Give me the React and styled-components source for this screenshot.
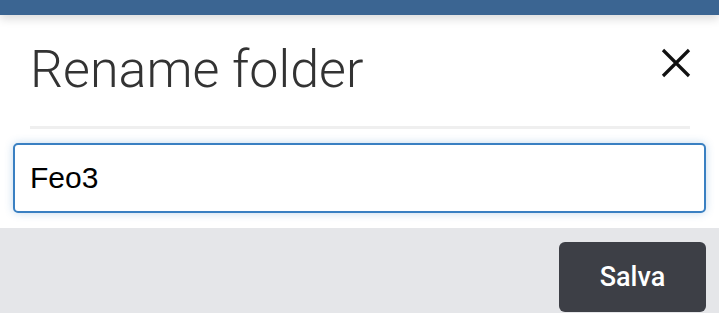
import styled, { createGlobalStyle } from "styled-components";

const GlobalStyle = createGlobalStyle`
    body {
        margin: 0;
        background: #ffffff;
        font-family: Roboto, "Noto Sans", sans-serif;
    }
`

export default function App() {
    return (
        <>
            <GlobalStyle />
            <TopBar />
            <Dialog>
                <Header>
                    <Title>Rename folder</Title>
                    <CloseButton aria-label="Close">
                        <svg width="30" height="30" viewBox="0 0 30 30">
                            <path d="M2 2 L28 28 M28 2 L2 28" stroke="#111" strokeWidth="3.2" fill="none" />
                        </svg>
                    </CloseButton>
                </Header>
                <Divider />
                <Body>
                    <NameInput defaultValue="Feo3" />
                </Body>
                <Footer>
                    <SaveButton>Salva</SaveButton>
                </Footer>
            </Dialog>
        </>
    )
}

const TopBar = styled.div`
    height: 15px;
    background-color: #3b6592;
    box-shadow: 0 4px 10px rgba(0, 0, 0, 0.14);
    position: relative;
`

const Dialog = styled.div`
    display: flex;
    flex-direction: column;
`

const Header = styled.div`
    display: flex;
    justify-content: space-between;
    align-items: flex-start;
    padding: 25px 28px 0 30px;
`

const Title = styled.h1`
    margin: 0;
    font-size: 52px;
    line-height: 60px;
    font-weight: 300;
    color: #333333;
`

const CloseButton = styled.button`
    border: none;
    background: none;
    padding: 0;
    margin-top: 8px;
    width: 30px;
    height: 30px;
    display: flex;
`

const Divider = styled.div`
    height: 3px;
    margin: 26px 29px 0 30px;
    background-color: #efefef;
`

const Body = styled.div`
    padding: 14px 13px 15px;
`

const NameInput = styled.input`
    box-sizing: border-box;
    width: 100%;
    height: 70px;
    padding: 0 15px;
    border: 2px solid #3a80c2;
    border-radius: 5px;
    box-shadow: 0 0 8px rgba(58, 128, 194, 0.3);
    font-family: "Liberation Sans", Arial, sans-serif;
    font-size: 30px;
    color: #000;
    outline: none;
`

const Footer = styled.div`
    display: flex;
    justify-content: flex-end;
    padding: 14px 13px 14px;
    background-color: #e5e6e9;
`

const SaveButton = styled.button`
    width: 147px;
    height: 70px;
    border: none;
    border-radius: 6px;
    background-color: #3d3f46;
    color: #ffffff;
    font-family: Roboto, sans-serif;
    font-size: 27px;
    font-weight: 500;
`
